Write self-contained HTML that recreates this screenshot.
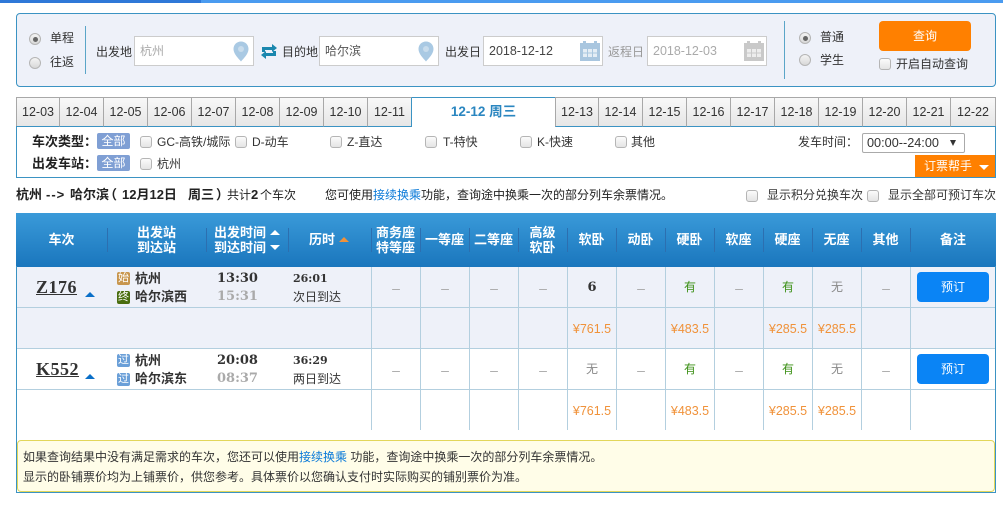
<!DOCTYPE html>
<html lang="zh"><head><meta charset="utf-8"><title>车票查询</title>
<style>
html,body{margin:0;padding:0;background:#fff}
body{width:1003px;height:506px;overflow:hidden;position:relative;font:12px/18px "Liberation Sans","WenQuanYi Zen Hei","Noto Sans CJK SC",sans-serif;color:#333}
.a{position:absolute;box-sizing:border-box}
.t{position:absolute;white-space:nowrap;line-height:18px}
.r{position:absolute;width:12px;height:12px;border-radius:50%;border:1px solid #b5b5b5;background:linear-gradient(#f4f4f4,#d8d8d8);box-sizing:border-box}
.r.on::after{content:"";position:absolute;left:2.5px;top:2.5px;width:5px;height:5px;border-radius:50%;background:#666}
.c{position:absolute;width:12px;height:12px;border:1px solid #b5b5b5;border-radius:3px;background:linear-gradient(#fbfbfb,#e4e4e4);box-sizing:border-box}
.i{position:absolute;top:36px;width:120px;height:30px;background:#fff;border:1px solid #ccc;box-sizing:border-box;padding-left:5px;line-height:28px;white-space:nowrap}
.dt{font-size:12.5px}
.tab{position:absolute;top:97px;height:30px;background:linear-gradient(#f8f8f8,#e6e6e6);border:1px solid #a8a8a8;border-left:0;border-bottom:1px solid #3b93c3;text-align:center;line-height:29px;box-sizing:border-box;font-size:12.5px}
.all{position:absolute;left:97px;width:33px;height:16px;background:#7f9fd4;color:#fff;text-align:center;line-height:16px;border-radius:2px}
.b{font-weight:bold}
.h13{font-size:13px;font-weight:bold;color:#222}
.hd{position:absolute;top:213px;color:#fff;font-weight:bold;text-align:center;line-height:15px;font-size:13px;white-space:nowrap}
.sp{position:absolute;top:228px;width:1px;height:24px;background:#2c6fb0}
table{position:absolute;left:16px;top:267px;width:980px;border-collapse:separate;border-spacing:0;table-layout:fixed}
td{height:41px;padding:0;box-sizing:border-box;border-left:1px solid #b3cfdf;border-bottom:1px solid #b3cfdf;text-align:center;color:#999;font-size:12px}
td:first-child{border-left:0}
tr.e td{background:#eef1f9}
tr:last-child td{border-bottom:0;height:40px}
td.d{font-size:14px;padding-top:1px;color:#aaa}
.g{color:#3a8f14}.n{color:#888}td.p{color:#f0923a;font-size:12.5px;padding-top:1px}
.bd{position:absolute;left:117px;width:13px;height:13px;color:#fff;font-size:11px;line-height:13px;text-align:center;border-radius:2px}
.tn{position:absolute;left:36px;font:bold 18px/20px "Liberation Serif",serif;letter-spacing:.5px;color:#333;text-decoration:underline}
.st{position:absolute;left:135px;font-weight:bold;font-size:13px;white-space:nowrap;line-height:18px}
.tm{position:absolute;left:217px;font:bold 13px/18px "DejaVu Serif",serif}
.ls{position:absolute;left:293px;font:bold 11px/18px "DejaVu Serif",serif}
.ar{position:absolute;width:0;height:0;border-left:5px solid transparent;border-right:5px solid transparent;border-bottom:5px solid #0a6fc8;left:85px}
.btn{position:absolute;left:917px;width:72px;height:30px;background:#0a84f5;color:#fff;border-radius:4px;text-align:center;line-height:30px}
</style></head><body>
<div class="a" style="left:0;top:0;width:1003px;height:3px;background:#4a9bf0"></div>
<div class="a" style="left:0;top:0;width:201px;height:3px;background:#2f78d8"></div>

<div class="a" style="left:16px;top:13px;width:980px;height:74px;background:#eef1f9;border:1px solid #3b93c3;border-radius:4px"></div>
<div class="r on" style="left:29px;top:33px"></div><div class="t" style="left:50px;top:29px">单程</div>
<div class="r" style="left:29px;top:57px"></div><div class="t" style="left:50px;top:53px">往返</div>
<div class="a" style="left:85px;top:26px;width:1px;height:48px;background:#5aa5c8"></div>
<div class="t" style="left:96px;top:43px">出发地</div>
<div class="i" style="left:134px;color:#aaa">杭州</div>
<svg class="a" style="left:233px;top:41px" width="16" height="21" viewBox="0 0 16 21"><path d="M8 0.5C3.8 0.5 .5 3.8 .5 8c0 5 5 9.500 7.500 12.500C10.500 17.500 15.500 13 15.500 8 15.500 3.800 12.200 .5 8 .5z" fill="#a9c9e3"/><circle cx="8" cy="8" r="3" fill="#c8dcec"/></svg>
<svg class="a" style="left:261px;top:44px" width="16" height="15" viewBox="0 0 16 15"><path d="M1 8V3h10V0l5 4-5 4V6H4v2zM15 7v5H5v3l-5-4 5-4v2h7V7z" fill="#1a87ae"/></svg>
<div class="t" style="left:282px;top:43px">目的地</div>
<div class="i" style="left:319px;color:#555">哈尔滨</div>
<svg class="a" style="left:418px;top:41px" width="16" height="21" viewBox="0 0 16 21"><path d="M8 0.5C3.800 .5 .5 3.800 .5 8c0 5 5 9.500 7.500 12.500C10.500 17.500 15.500 13 15.500 8 15.500 3.800 12.200 .5 8 .5z" fill="#a9c9e3"/><circle cx="8" cy="8" r="3" fill="#c8dcec"/></svg>
<div class="t" style="left:445px;top:43px">出发日</div>
<div class="i dt" style="left:483px;color:#444">2018-12-12</div>
<svg class="a" style="left:580px;top:41px" width="20" height="20" viewBox="0 0 20 20"><rect y="2" width="20" height="18" fill="#a9c6df"/><rect x="3" y="0" width="3" height="4" fill="#a9c6df"/><rect x="14" y="0" width="3" height="4" fill="#a9c6df"/><path d="M3 8h4v3.500H3zM8 8h4v3.500H8zM13 8h4v3.500h-4zM3 12.500h4V16H3zM8 12.500h4V16H8zM13 12.500h4V16h-4z" fill="#e4edf5"/></svg>
<div class="t" style="left:608px;top:43px;color:#999">返程日</div>
<div class="i dt" style="left:647px;color:#aaa">2018-12-03</div>
<svg class="a" style="left:744px;top:41px" width="20" height="20" viewBox="0 0 20 20"><rect y="2" width="20" height="18" fill="#c9c9c9"/><rect x="3" y="0" width="3" height="4" fill="#c9c9c9"/><rect x="14" y="0" width="3" height="4" fill="#c9c9c9"/><path d="M3 8h4v3.500H3zM8 8h4v3.500H8zM13 8h4v3.500h-4zM3 12.500h4V16H3zM8 12.500h4V16H8zM13 12.500h4V16h-4z" fill="#ededed"/></svg>
<div class="a" style="left:784px;top:21px;width:1px;height:58px;background:#5aa5c8"></div>
<div class="r on" style="left:799px;top:32px"></div><div class="t" style="left:820px;top:28px">普通</div>
<div class="r" style="left:799px;top:54px"></div><div class="t" style="left:820px;top:51px">学生</div>
<div class="a" style="left:879px;top:21px;width:92px;height:30px;background:#ff8000;border-radius:4px;color:#fff;text-align:center;line-height:30px">查询</div>
<div class="c" style="left:879px;top:58px"></div><div class="t" style="left:896px;top:55px">开启自动查询</div>

<div class="tab" style="left:16px;width:44px;border-left:1px solid #a8a8a8">12-03</div>
<div class="tab" style="left:60px;width:44px">12-04</div>
<div class="tab" style="left:104px;width:44px">12-05</div>
<div class="tab" style="left:148px;width:44px">12-06</div>
<div class="tab" style="left:192px;width:44px">12-07</div>
<div class="tab" style="left:236px;width:44px">12-08</div>
<div class="tab" style="left:280px;width:44px">12-09</div>
<div class="tab" style="left:324px;width:44px">12-10</div>
<div class="tab" style="left:368px;width:44px;border-right-color:#3b93c3">12-11</div>
<div class="a b" style="left:412px;top:97px;width:143px;height:30px;border-top:1px solid #3b93c3;color:#2a86c0;text-align:center;line-height:27px;font-size:13.5px">12-12 周三</div>
<div class="tab" style="left:555px;width:44px;border-left:1px solid #a8a8a8">12-13</div>
<div class="tab" style="left:599px;width:44px">12-14</div>
<div class="tab" style="left:643px;width:44px">12-15</div>
<div class="tab" style="left:687px;width:44px">12-16</div>
<div class="tab" style="left:731px;width:44px">12-17</div>
<div class="tab" style="left:775px;width:44px">12-18</div>
<div class="tab" style="left:819px;width:44px">12-19</div>
<div class="tab" style="left:863px;width:44px">12-20</div>
<div class="tab" style="left:907px;width:44px">12-21</div>
<div class="tab" style="left:951px;width:45px">12-22</div>

<div class="a" style="left:16px;top:126px;width:980px;height:52px;border:1px solid #3b93c3;border-top:0"></div>
<div class="t h13" style="left:32px;top:133px">车次类型：</div>
<div class="all" style="top:133px">全部</div>
<div class="c" style="left:140px;top:136px"></div><div class="t" style="left:157px;top:133px">GC-高铁/城际</div>
<div class="c" style="left:235px;top:136px"></div><div class="t" style="left:252px;top:133px">D-动车</div>
<div class="c" style="left:330px;top:136px"></div><div class="t" style="left:347px;top:133px">Z-直达</div>
<div class="c" style="left:425px;top:136px"></div><div class="t" style="left:443px;top:133px">T-特快</div>
<div class="c" style="left:520px;top:136px"></div><div class="t" style="left:537px;top:133px">K-快速</div>
<div class="c" style="left:615px;top:136px"></div><div class="t" style="left:631px;top:133px">其他</div>
<div class="t" style="left:798px;top:133px">发车时间：</div>
<div class="a" style="left:862px;top:133px;width:103px;height:20px;border:1px solid #aaa;border-radius:2px;background:#fff;padding-left:4px;line-height:19px;font-size:12.700px">00:00--24:00</div>
<div class="a" style="left:950px;top:140px;border-left:3.500px solid transparent;border-right:3.500px solid transparent;border-top:6px solid #333"></div>
<div class="t h13" style="left:32px;top:155px">出发车站：</div>
<div class="all" style="top:155px">全部</div>
<div class="c" style="left:140px;top:158px"></div><div class="t" style="left:157px;top:155px">杭州</div>
<div class="a" style="left:915px;top:155px;width:80px;height:22px;background:#ff8000;color:#fff;line-height:23px;padding-left:9px">订票帮手</div>
<div class="a" style="left:979px;top:165px;border-left:5px solid transparent;border-right:5px solid transparent;border-top:5px solid #fff"></div>

<div class="t h13" style="left:16px;top:186px">杭州</div>
<div class="t h13" style="left:46px;top:186px;letter-spacing:1px">--&gt;</div>
<div class="t h13" style="left:70px;top:186px">哈尔滨</div>
<div class="t h13" style="left:104px;top:186px">（</div>
<div class="t h13" style="left:122px;top:186px">12月12日</div>
<div class="t h13" style="left:188px;top:186px">周三</div>
<div class="t h13" style="left:216px;top:186px">）</div>
<div class="t" style="left:227px;top:186px;color:#222">共计</div>
<div class="t h13" style="left:251px;top:186px">2</div>
<div class="t" style="left:260px;top:186px;color:#222">个车次</div>
<div class="t" style="left:325px;top:186px;color:#222">您可使用<span style="color:#0a7ad8">接续换乘</span>功能，查询途中换乘一次的部分列车余票情况。</div>
<div class="c" style="left:746px;top:190px"></div><div class="t" style="left:767px;top:186px">显示积分兑换车次</div>
<div class="c" style="left:867px;top:190px"></div><div class="t" style="left:888px;top:186px">显示全部可预订车次</div>

<div class="a" style="left:16px;top:213px;width:980px;height:54px;background:linear-gradient(#3a9ad9,#1a76bd)"></div>
<div class="hd" style="left:16px;width:91px;line-height:53px">车次</div>
<div class="hd" style="left:107px;width:99px;padding-top:12px">出发站<br>到达站</div>
<div class="hd" style="left:214px;width:52px;padding-top:12px">出发时间<br>到达时间</div>
<div class="a" style="left:270px;top:230px;border-left:5px solid transparent;border-right:5px solid transparent;border-bottom:5px solid #fff"></div>
<div class="a" style="left:270px;top:245px;border-left:5px solid transparent;border-right:5px solid transparent;border-top:5px solid #fff"></div>
<div class="hd" style="left:288px;width:68px;line-height:53px">历时</div>
<div class="a" style="left:339px;top:237px;border-left:5px solid transparent;border-right:5px solid transparent;border-bottom:5px solid #f0923a"></div>
<div class="hd" style="left:371px;width:49px;padding-top:12px">商务座<br>特等座</div>
<div class="hd" style="left:420px;width:49px;line-height:53px">一等座</div>
<div class="hd" style="left:469px;width:49px;line-height:53px">二等座</div>
<div class="hd" style="left:518px;width:49px;padding-top:12px">高级<br>软卧</div>
<div class="hd" style="left:567px;width:49px;line-height:53px">软卧</div>
<div class="hd" style="left:616px;width:49px;line-height:53px">动卧</div>
<div class="hd" style="left:665px;width:49px;line-height:53px">硬卧</div>
<div class="hd" style="left:714px;width:49px;line-height:53px">软座</div>
<div class="hd" style="left:763px;width:49px;line-height:53px">硬座</div>
<div class="hd" style="left:812px;width:49px;line-height:53px">无座</div>
<div class="hd" style="left:861px;width:49px;line-height:53px">其他</div>
<div class="hd" style="left:910px;width:86px;line-height:53px">备注</div>
<div class="sp" style="left:107px"></div><div class="sp" style="left:206px"></div><div class="sp" style="left:288px"></div><div class="sp" style="left:371px"></div><div class="sp" style="left:420px"></div><div class="sp" style="left:469px"></div><div class="sp" style="left:518px"></div><div class="sp" style="left:567px"></div><div class="sp" style="left:616px"></div><div class="sp" style="left:665px"></div><div class="sp" style="left:714px"></div><div class="sp" style="left:763px"></div><div class="sp" style="left:812px"></div><div class="sp" style="left:861px"></div><div class="sp" style="left:910px"></div>

<table><colgroup><col style="width:355px"><col style="width:49px"><col style="width:49px"><col style="width:49px"><col style="width:49px"><col style="width:49px"><col style="width:49px"><col style="width:49px"><col style="width:49px"><col style="width:49px"><col style="width:49px"><col style="width:49px"><col style="width:86px"></colgroup>
<tr class="e"><td></td><td class="d">–</td><td class="d">–</td><td class="d">–</td><td class="d">–</td><td style="color:#333;font:bold 13px 'DejaVu Serif',serif">6</td><td class="d">–</td><td class="g">有</td><td class="d">–</td><td class="g">有</td><td class="n">无</td><td class="d">–</td><td></td></tr>
<tr class="e"><td></td><td></td><td></td><td></td><td></td><td class="p">¥761.5</td><td></td><td class="p">¥483.5</td><td></td><td class="p">¥285.5</td><td class="p">¥285.5</td><td></td><td></td></tr>
<tr><td></td><td class="d">–</td><td class="d">–</td><td class="d">–</td><td class="d">–</td><td class="n">无</td><td class="d">–</td><td class="g">有</td><td class="d">–</td><td class="g">有</td><td class="n">无</td><td class="d">–</td><td></td></tr>
<tr><td></td><td></td><td></td><td></td><td></td><td class="p">¥761.5</td><td></td><td class="p">¥483.5</td><td></td><td class="p">¥285.5</td><td class="p">¥285.5</td><td></td><td></td></tr>
</table>

<div class="tn" style="top:277px">Z176</div><div class="ar" style="top:292px"></div>
<div class="bd" style="top:272px;background:#c8964e">始</div><div class="st" style="top:270px">杭州</div>
<div class="bd" style="top:291px;background:#4a6e10">终</div><div class="st" style="top:288px">哈尔滨西</div>
<div class="tm" style="top:270px">13:30</div><div class="tm" style="top:288px;color:#aaa">15:31</div>
<div class="ls" style="top:270px">26:01</div><div class="t" style="left:293px;top:288px">次日到达</div>
<div class="btn" style="top:272px">预订</div>

<div class="tn" style="top:359px">K552</div><div class="ar" style="top:374px"></div>
<div class="bd" style="top:354px;background:#6a9fd8">过</div><div class="st" style="top:352px">杭州</div>
<div class="bd" style="top:373px;background:#6a9fd8">过</div><div class="st" style="top:370px">哈尔滨东</div>
<div class="tm" style="top:352px">20:08</div><div class="tm" style="top:370px;color:#aaa">08:37</div>
<div class="ls" style="top:352px">36:29</div><div class="t" style="left:293px;top:370px">两日到达</div>
<div class="btn" style="top:354px">预订</div>

<div class="a" style="left:16px;top:266px;width:1px;height:227px;background:#3b93c3"></div>
<div class="a" style="left:995px;top:266px;width:1px;height:227px;background:#3b93c3"></div>
<div class="a" style="left:16px;top:492px;width:980px;height:1px;background:#3b93c3"></div>
<div class="a" style="left:17px;top:440px;width:978px;height:52px;background:#fffde8;border:1px solid #e2d65a;border-radius:4px"></div>
<div class="t" style="left:23px;top:448px">如果查询结果中没有满足需求的车次，您还可以使用<span style="color:#0a7ad8">接续换乘</span> 功能，查询途中换乘一次的部分列车余票情况。</div>
<div class="t" style="left:23px;top:468px">显示的卧铺票价均为上铺票价，供您参考。具体票价以您确认支付时实际购买的铺别票价为准。</div>
</body></html>
